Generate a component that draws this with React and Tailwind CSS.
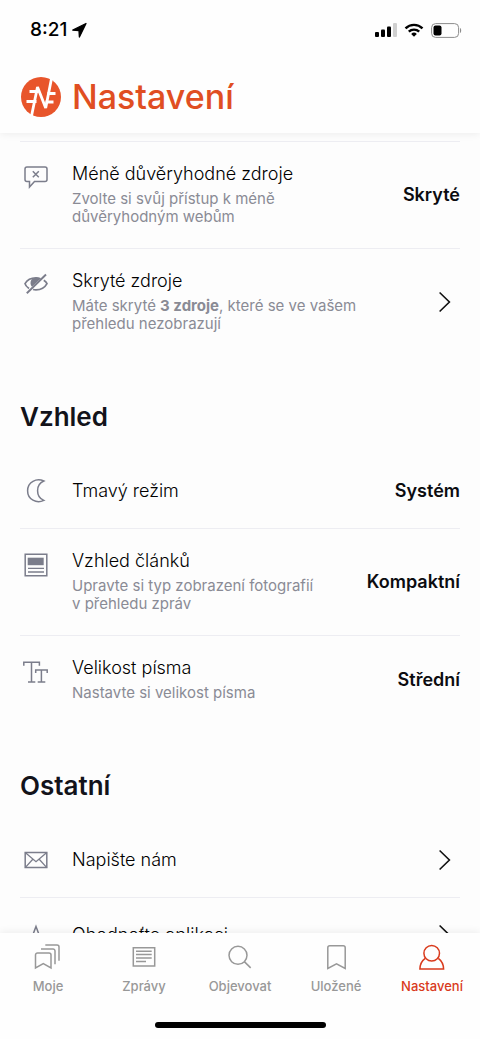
const stroke = {
  fill: 'none',
  stroke: 'currentColor',
  strokeWidth: 1.5,
}

function RowIcon({ children }) {
  return (
    <svg aria-hidden="true" viewBox="0 0 28 28" className="h-7 w-7 text-[#7b7d8b]" {...stroke}>
      {children}
    </svg>
  )
}

function TabIcon({ children }) {
  return (
    <svg aria-hidden="true" viewBox="0 0 32 32" className="h-8 w-8" {...stroke}>
      {children}
    </svg>
  )
}

const SpeechIcon = () => (
  <RowIcon>
    <path d="M5 3h18a2 2 0 0 1 2 2v10.500a2 2 0 0 1-2 2H12.500L7.500 23v-5.500H5a2 2 0 0 1-2-2V5a2 2 0 0 1 2-2z" />
    <path d="M10.800 7.200l6 6M16.800 7.200l-6 6" />
  </RowIcon>
)

const HiddenIcon = () => (
  <RowIcon>
    <path d="M7 17.500C4.800 16 3.300 14.200 3 12.700 5 9.200 9 6.900 14 6.900c1.600 0 3.200.3 4.500.8" strokeWidth="1.700" />
    <path d="M21.800 9.200c1.500 1 2.700 2.300 3.200 3.500-2 3.700-6 6.200-11 6.200-1 0-2-.1-2.900-.4" strokeWidth="1.700" />
    <path d="M18.600 7.600C15.500 6.200 12 6.200 9.600 8.400c-1.600 2-1.500 5.500.4 7.400z" fill="currentColor" stroke="none" />
    <path d="M4.800 22.300L24 3.500" strokeWidth="1.900" />
  </RowIcon>
)

const MoonIcon = () => (
  <RowIcon>
    <path d="M21.800 4C13.500 7.500 13.500 19.800 21.800 23.400 14.500 26.800 5.600 22.500 5.600 13.700S14.500.700 21.800 4z" />
  </RowIcon>
)

const ArticleIcon = () => (
  <RowIcon>
    <path d="M3.200 3.200h21.600v21.600H3.200z" />
    <path d="M5.700 6.700h16v7.500h-16z" fill="currentColor" stroke="none" />
    <path d="M6 17.400h16M6 21h16" strokeWidth="1.300" />
  </RowIcon>
)

const TextSizeIcon = () => (
  <RowIcon>
    <path d="M1.800 7.800V4.200h15.600v3.600M9.500 4.200V24M6 24h7.300" />
    <path d="M13.700 15v-2.900h11.500V15M19.400 12.100V24M15.700 24h7.600" />
  </RowIcon>
)

const MailIcon = () => (
  <RowIcon>
    <path d="M3.200 6.400h21.600v15.200H3.200z" />
    <path d="M3.200 6.400L14 15.700l10.800-9.300M3.200 21.600l7.600-8.400M24.800 21.600l-7.600-8.400" strokeWidth="1.300" />
  </RowIcon>
)

const StarIcon = () => (
  <RowIcon>
    <path d="M14 5.500l2.700 7.200 8.100.2-6.400 5 2.300 7.800L14 21.100l-6.700 4.600 2.300-7.800-6.400-5 8.100-.2z" />
  </RowIcon>
)

const Chevron = () => (
  <svg aria-hidden="true" viewBox="0 0 14 22" className="mr-2 h-[22px] w-[14px]" fill="none" stroke="#111" strokeWidth="1.600">
    <path d="M1.600 1.500l9.800 9.500-9.800 9.500" />
  </svg>
)

function Row({ icon, title, children, value }) {
  return (
    <li className="border-b border-[#ededf2] last:border-b-0">
      <button type="button" className="flex min-h-[74px] w-full items-center text-left">
        <span className={children ? 'w-[52px] shrink-0 self-start pt-[22px] pl-0.5' : 'w-[52px] shrink-0 pl-0.5'}>{icon}</span>
        <span className={children ? 'min-w-0 flex-1 pt-[21px] pb-[22px]' : 'min-w-0 flex-1'}>
          <span className="block text-[18px] leading-[22px] font-light text-black">{title}</span>
          {children && <span className="mt-[5px] block text-[15px] leading-[18px] font-normal text-[#8a8b95]">{children}</span>}
        </span>
        {value ? <span className="shrink-0 text-[18px] leading-[22px] font-semibold text-[#0c0c10]">{value}</span> : <Chevron />}
      </button>
    </li>
  )
}

function Heading({ children }) {
  return <h2 className="pt-[46px] pb-[21px] text-[26px] leading-8 font-semibold text-[#13131a]">{children}</h2>
}

const tabs = [
  {
    label: 'Moje',
    icon: (
      <TabIcon>
        <path d="M5.500 12h11.500a2 2 0 0 1 2 2v13l-7.700-4.500L3.500 27V14a2 2 0 0 1 2-2z" />
        <path d="M9 7.900h12a2 2 0 0 1 2 2v13.400M13.300 4.100H25a2 2 0 0 1 2 2v13.600" />
      </TabIcon>
    ),
  },
  {
    label: 'Zprávy',
    icon: (
      <TabIcon>
        <path d="M5.300 6.800h21.400v18.300H5.300z" />
        <path d="M8 10.200h15.700M8 13.500h15.700M8 17h15.700M8 20.600h10" />
      </TabIcon>
    ),
  },
  {
    label: 'Objevovat',
    icon: (
      <TabIcon>
        <circle cx="14" cy="14.300" r="9" />
        <path d="M20.300 20.600l6.400 6.300" />
      </TabIcon>
    ),
  },
  {
    label: 'Uložené',
    icon: (
      <TabIcon>
        <path d="M9.800 4.700h13.400a2 2 0 0 1 2 2V27.400L16.500 22.900l-8.700 4.500V6.700a2 2 0 0 1 2-2z" />
      </TabIcon>
    ),
  },
  {
    label: 'Nastavení',
    active: true,
    icon: (
      <TabIcon>
        <circle cx="15.700" cy="12.300" r="7.800" />
        <path d="M9.200 17.300C5.800 19.700 4 23.300 3.900 28h23.700c-.1-4.700-1.900-8.300-5.300-10.700" />
      </TabIcon>
    ),
  },
]

export default function App() {
  return (
    <div className="flex h-screen flex-col overflow-hidden bg-[#fdfdfd] font-['Inter',sans-serif]">
      <header className="relative z-10 shrink-0 bg-[#fefefe] pb-4 shadow-[0_1px_8px_rgba(0,0,0,0.07)]">
        <div className="flex h-[60px] items-center justify-between pr-[18px] pl-[30px]">
          <div className="flex items-center gap-1 text-[19px] leading-6 font-medium text-black">
            <span>8:21</span>
            <svg aria-hidden="true" viewBox="0 0 16 16" className="h-4 w-4" fill="#000" stroke="#000" strokeLinejoin="round">
              <path d="M15 1.500L1.800 8.200l6.200.5.400 6.300z" strokeWidth="1.300" />
            </svg>
          </div>
          <div className="flex items-center gap-[7px]">
            <svg aria-hidden="true" viewBox="0 0 22 14" className="h-[14px] w-[22px]">
              <rect x="0" y="9" width="4" height="5" rx="1" />
              <rect x="6" y="6.500" width="4" height="7.500" rx="1" />
              <rect x="12" y="3.500" width="4" height="10.500" rx="1" />
              <rect x="18" y="0" width="4" height="14" rx="1" fill="#d0d0d0" />
            </svg>
            <svg aria-hidden="true" viewBox="0 0 20 14" className="h-[14px] w-5" fill="none" stroke="#000" strokeWidth="2.400">
              <path d="M1.500 5.300a12.200 12.200 0 0 1 17 0M4.800 8.700a7.500 7.500 0 0 1 10.400 0" />
              <path d="M10 13.800l-2.800-2.900a4 4 0 0 1 5.600 0z" fill="#000" stroke="none" />
            </svg>
            <svg aria-hidden="true" viewBox="0 0 31 15" className="h-[15px] w-[31px]">
              <rect x="0.600" y="0.600" width="27" height="13.800" rx="4" fill="none" stroke="#8c8c8c" />
              <rect x="2.500" y="2.500" width="8" height="10" rx="2" />
              <path d="M29 5c1.600.6 1.600 4.400 0 5z" fill="#8c8c8c" />
            </svg>
          </div>
        </div>
        <div className="flex h-[57px] items-end gap-[11px] px-[21px]">
          <svg aria-hidden="true" viewBox="0 0 40 40" className="h-10 w-10 shrink-0">
            <circle cx="20" cy="20" r="20" fill="#e8552b" />
            <g fill="none" stroke="#fff" strokeWidth="2.800">
              <path d="M10.500 39L16.500 10l8.200 21L30.500 1.500" strokeLinejoin="bevel" />
              <path d="M8.500 14.500h9M5.500 24.500h10M26.500 16.500h8M24.500 25h8" />
            </g>
          </svg>
          <h1 className="text-[34px] leading-10 font-medium text-[#e04e22]">Nastavení</h1>
        </div>
      </header>

      <main className="min-h-0 flex-1 overflow-hidden px-5 pt-2">
        <ul className="border-t border-[#ededf2]">
          <Row icon={<SpeechIcon />} title="Méně důvěryhodné zdroje" value="Skryté">
            Zvolte si svůj přístup k méně
            <br />
            důvěryhodným webům
          </Row>
          <Row icon={<HiddenIcon />} title="Skryté zdroje">
            Máte skryté <strong className="font-bold">3 zdroje</strong>, které se ve vašem
            <br />
            přehledu nezobrazují
          </Row>
        </ul>

        <Heading>Vzhled</Heading>
        <ul>
          <Row icon={<MoonIcon />} title="Tmavý režim" value="Systém" />
          <Row icon={<ArticleIcon />} title="Vzhled článků" value="Kompaktní">
            Upravte si typ zobrazení fotografií
            <br />v přehledu zpráv
          </Row>
          <Row icon={<TextSizeIcon />} title="Velikost písma" value="Střední">
            Nastavte si velikost písma
          </Row>
        </ul>

        <Heading>Ostatní</Heading>
        <ul>
          <Row icon={<MailIcon />} title="Napište nám" />
          <Row icon={<StarIcon />} title="Ohodnoťte aplikaci" />
        </ul>
      </main>

      <nav className="relative z-10 shrink-0 bg-[#fefefe] pt-2 pb-[11px] shadow-[0_-1px_8px_rgba(0,0,0,0.07)]">
        <ul className="grid grid-cols-5">
          {tabs.map((tab) => (
            <li key={tab.label}>
              <a
                href="#"
                aria-current={tab.active ? 'page' : undefined}
                className={
                  tab.active
                    ? 'flex flex-col items-center gap-[5px] text-[13px] leading-4 font-medium text-[#d93a1c]'
                    : 'flex flex-col items-center gap-[5px] text-[13px] leading-4 font-medium text-[#989898]'
                }
              >
                {tab.icon}
                <span>{tab.label}</span>
              </a>
            </li>
          ))}
        </ul>
        <div className="mx-auto mt-7 h-1.5 w-[171px] rounded-full bg-black" />
      </nav>
    </div>
  )
}
